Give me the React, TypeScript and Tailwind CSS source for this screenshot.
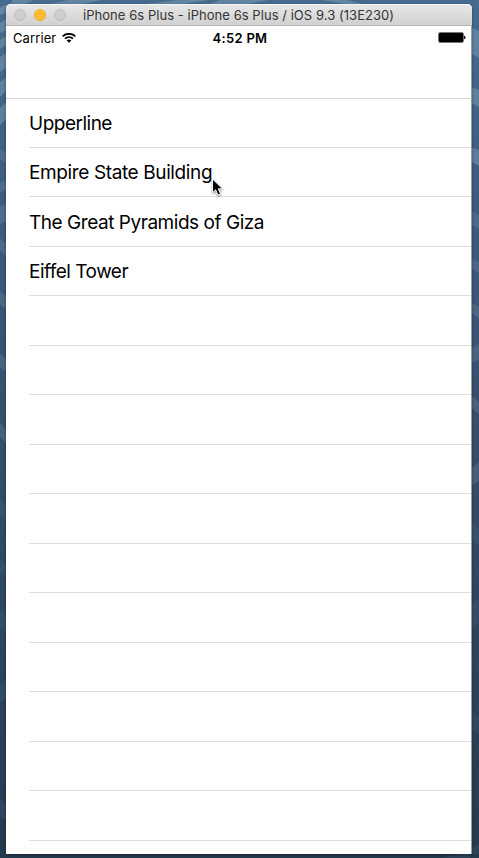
import React from "react";

type Row = { label: string; tall: boolean; spacing?: string };

const rows: Row[] = [
  { label: "Upperline", tall: false, spacing: "tracking-[-0.5px]" },
  { label: "Empire State Building", tall: false, spacing: "tracking-[-0.38px]" },
  { label: "The Great Pyramids of Giza", tall: true, spacing: "tracking-[-0.46px]" },
  { label: "Eiffel Tower", tall: false, spacing: "tracking-[-0.5px]" },
  ...Array.from({ length: 11 }, (_, i) => ({ label: "", tall: i % 2 === 0 })),
];

function Wallpaper() {
  return (
    <svg className="absolute inset-0 h-full w-full" viewBox="0 0 479 858" preserveAspectRatio="none" aria-hidden="true">
      <defs>
        <linearGradient id="sea" x1="0" y1="0" x2="0" y2="1">
          <stop offset="0" stopColor="#476b8e" />
          <stop offset="0.2" stopColor="#3e5f82" />
          <stop offset="0.45" stopColor="#37516f" />
          <stop offset="0.7" stopColor="#2e4661" />
          <stop offset="1" stopColor="#263a4e" />
        </linearGradient>
      </defs>
      <rect width="479" height="858" fill="url(#sea)" />
      <g fill="#8fb0c0" fillOpacity="0.38">
        <path d="M0 7L12 3V0H34L0 15ZM0 23L8 18V29L0 33ZM0 40L8 35V44L0 49ZM0 57L8 52V66L0 72ZM0 82L8 76V89L0 97ZM0 108L8 101V117L0 125Z" />
        <path d="M50 4L68 0H102L82 4ZM146 4L178 0H208L184 4ZM220 0H268L248 4H210ZM322 0L344 4H362L348 0Z" />
        <path d="M470 27L479 31V58L470 53ZM470 87L479 90V107L470 102ZM470 147L479 150V166L470 161Z" />
      </g>
      <g fill="#80a0b5" fillOpacity="0.24">
        <path d="M0 150L8 154V164L0 159ZM0 183L8 180V189L0 193ZM0 207L8 203V220L0 224ZM0 238L8 246V258L0 250ZM0 292L8 297V311L0 304ZM0 354L8 360V373L0 368ZM0 423L8 432V445L0 437Z" />
        <path d="M470 211L479 215V229L470 224ZM470 258L479 262V273L470 268ZM470 301L479 307V319L470 311ZM470 349L479 344V359L470 364ZM470 394L479 402V414L470 407ZM470 470L479 462V481L470 487Z" />
      </g>
      <g fill="#668caa" fillOpacity="0.12">
        <path d="M0 498L8 506V521L0 515ZM0 560L8 567V577L0 574ZM0 610L8 615V632L0 628ZM0 685L8 678V697L0 703ZM0 799L8 806V821L0 817Z" />
        <path d="M470 522L479 529V545L470 539ZM470 604L479 598V622L470 628ZM470 710L479 717V733L470 729ZM440 858L458 854H479V844L470 848V858Z" />
      </g>
    </svg>
  );
}

function TitleBar() {
  return (
    <header className="flex h-[22px] shrink-0 items-center rounded-t-[5px] border-b border-[#b4b4b4] bg-linear-to-b from-[#e8e8e8] to-[#d0d0d0] pl-2 shadow-[inset_0_1px_0_#f5f5f5]">
      <div className="flex gap-2">
        <span className="size-3 rounded-full border border-[#bdbdbd] bg-[#cdcdcd]" />
        <span className="size-3 rounded-full border border-[#f0ae29] bg-[#ffbd2e]" />
        <span className="size-3 rounded-full border border-[#bdbdbd] bg-[#cdcdcd]" />
      </div>
      <h1 className="ml-[17px] whitespace-nowrap text-[13px] leading-5 tracking-[0.045px] text-[#353535]">
        iPhone 6s Plus - iPhone 6s Plus / iOS 9.3 (13E230)
      </h1>
    </header>
  );
}

function StatusBar() {
  return (
    <div className="grid h-6 grid-cols-3 items-center pl-[7px] pr-1 text-[13px] leading-6 text-black">
      <div className="flex items-center gap-[6px]">
        <span className="tracking-[0.1px]">Carrier</span>
        <svg className="mb-px h-[10px] w-[14px]" viewBox="0 0 14 10" fill="none" aria-hidden="true">
          <path d="M.7 3.3C4.3 0 9.7 0 13.3 3.3" stroke="#000" strokeWidth="1.8" />
          <path d="M3 5.7C5.3 3.6 8.7 3.6 11 5.7" stroke="#000" strokeWidth="1.7" />
          <path d="M4.7 7.4C6 6.3 8 6.3 9.3 7.4L7 9.8Z" fill="#000" />
        </svg>
      </div>
      <time className="text-center font-semibold tracking-[0.3px]">4:52 PM</time>
      <svg className="mb-px mr-px h-[11px] w-[28px] justify-self-end" viewBox="0 0 28 11" aria-hidden="true">
        <rect x=".5" y=".5" width="25" height="10" rx="1.2" stroke="#777" fill="#fff" />
        <rect x="1" y="1" width="24" height="9" rx=".8" fill="#000" />
        <path d="M26 3.8Q27.5 4 27.5 5.5T26 7.2Z" fill="#000" />
      </svg>
    </div>
  );
}

export default function App() {
  return (
    <main className="relative h-[858px] w-[479px] overflow-hidden font-['Inter','Liberation_Sans',sans-serif]">
      <Wallpaper />
      <div className="relative pl-[6px] pt-1">
        <section className="flex h-[850px] w-[466px] flex-col rounded-t-[5px] bg-white shadow-[0_1px_3px_rgba(0,0,0,0.4)]">
          <TitleBar />
          <div className="h-[73px] shrink-0 border-b border-r border-[#d5d5d7] border-r-[#9a9a9a]">
            <StatusBar />
          </div>
          <ul className="min-h-0 flex-1 overflow-hidden border-r border-[#9a9a9a] pl-[23px]">
            {rows.map((row, i) => (
              <li
                key={i}
                className={`${row.tall ? "h-[50px]" : "h-[49px]"} flex items-center border-b border-[#dedee0] pt-0.5 text-[19px] leading-6 text-black`}
              >
                <span className={`whitespace-nowrap ${row.spacing ?? ""}`}>{row.label}</span>
              </li>
            ))}
          </ul>
        </section>
      </div>
      <svg className="absolute left-[211px] top-[177px] h-[22px] w-[15px]" viewBox="0 0 15 22" aria-hidden="true">
        <path
          d="M1.5 2V15.8L4.6 12.8L7 18.2L9.6 17.1L7.3 11.8H11.6Z"
          fill="#000"
          stroke="#fff"
          strokeWidth="1"
          className="drop-shadow-[0_1px_1px_rgba(0,0,0,0.45)]"
        />
      </svg>
    </main>
  );
}
